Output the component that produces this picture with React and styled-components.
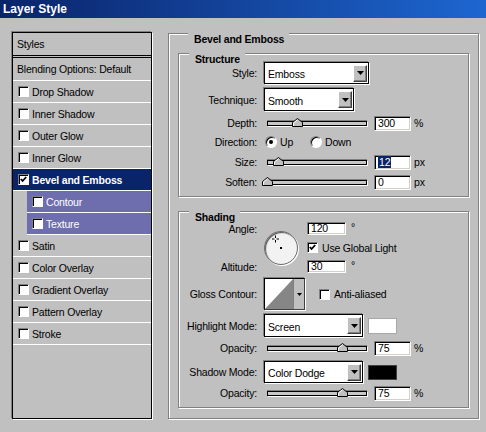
import React from 'react';
import styled, { createGlobalStyle } from 'styled-components';

const GlobalStyle = createGlobalStyle`
  html, body {
    margin: 0;
    padding: 0;
    background: #c0c0c0;
  }
`;

const layerStyles = [
  { label: 'Drop Shadow' },
  { label: 'Inner Shadow' },
  { label: 'Outer Glow' },
  { label: 'Inner Glow' },
  { label: 'Bevel and Emboss', checked: true, tone: 'active' },
  { label: 'Contour', tone: 'sub' },
  { label: 'Texture', tone: 'sub' },
  { label: 'Satin' },
  { label: 'Color Overlay' },
  { label: 'Gradient Overlay' },
  { label: 'Pattern Overlay' },
  { label: 'Stroke' },
];

const CheckBox = ({ checked }) => (
  <Check>
    {checked && (
      <svg width="7" height="7" viewBox="0 0 7 7">
        <polyline points="0.8,3 2.6,5 6.2,1" fill="none" stroke="#000" strokeWidth="1.8" />
      </svg>
    )}
  </Check>
);

const Select = ({ value, width, height }) => (
  <SelectBox $w={width} $h={height}>
    <SelectText>{value}</SelectText>
    <DropButton>
      <svg width="7" height="4" viewBox="0 0 7 4">
        <polygon points="0,0 7,0 3.5,4" fill="#000" />
      </svg>
    </DropButton>
  </SelectBox>
);

const SliderField = ({ value, text, unit, selected }) => (
  <>
    <Slider>
      <Track />
      <Thumb style={{ left: `calc(${value}% - 5px)` }}>
        <svg width="11" height="9" viewBox="0 0 11 9">
          <polygon points="0.5,8.5 0.5,4.5 5.5,0.5 10.5,4.5 10.5,8.5" fill="#c0c0c0" stroke="#000" />
          <polyline points="1.5,8 1.5,5 5.5,1.8" fill="none" stroke="#fff" />
        </svg>
      </Thumb>
    </Slider>
    <Value>
      <NumberField>{selected ? <Selected>{text}</Selected> : text}</NumberField>
      <Unit>{unit}</Unit>
    </Value>
  </>
);

const App = () => {
  return (
    <Window>
      <GlobalStyle />
      <TitleBar>Layer Style</TitleBar>
      <Main>
        <StyleList>
          <ListHeader $double>Styles</ListHeader>
          <ListHeader>Blending Options: Default</ListHeader>
          {layerStyles.map((s) => (
            <ListItem key={s.label} $sub={s.tone === 'sub'}>
              <ItemBody $tone={s.tone}>
                <CheckBox checked={s.checked} />
                {s.label}
              </ItemBody>
            </ListItem>
          ))}
        </StyleList>

        <GroupBox $px={9} $pb={10} $mt={1} $w={311}>
          <Caption>Bevel and Emboss</Caption>

          <GroupBox $pb={6} $mt={11}>
            <Caption>Structure</Caption>
            <FieldRow $h={22}>
              <Label>Style:</Label>
              <Controls>
                <Select value="Emboss" width={105} height={22} />
              </Controls>
            </FieldRow>
            <FieldRow $h={23} $mt={4}>
              <Label>Technique:</Label>
              <Controls>
                <Select value="Smooth" width={90} height={23} />
              </Controls>
            </FieldRow>
            <FieldRow $h={16} $mt={4}>
              <Label>Depth:</Label>
              <Controls>
                <SliderField value={30} text="300" unit="%" />
              </Controls>
            </FieldRow>
            <FieldRow $h={16} $mt={3}>
              <Label>Direction:</Label>
              <Controls $gap={0}>
                <RadioOption $w={44}>
                  <Radio $on />
                  Up
                </RadioOption>
                <RadioOption>
                  <Radio />
                  Down
                </RadioOption>
              </Controls>
            </FieldRow>
            <FieldRow $h={16} $mt={4}>
              <Label>Size:</Label>
              <Controls>
                <SliderField value={11} text="12" unit="px" selected />
              </Controls>
            </FieldRow>
            <FieldRow $h={16} $mt={4}>
              <Label>Soften:</Label>
              <Controls>
                <SliderField value={0} text="0" unit="px" />
              </Controls>
            </FieldRow>
          </GroupBox>

          <GroupBox $pb={6} $mt={14}>
            <Caption>Shading</Caption>
            <AngleGrid>
              <Label $row={1}>Angle:</Label>
              <Dial>
                <svg width="32" height="32" viewBox="0 0 32 32">
                  <g stroke="#000" strokeWidth="1">
                    <line x1="7" y1="7" x2="9.5" y2="7" />
                    <line x1="11.5" y1="7" x2="14" y2="7" />
                    <line x1="10.5" y1="3.5" x2="10.5" y2="6" />
                    <line x1="10.5" y1="8" x2="10.5" y2="10.5" />
                  </g>
                  <rect x="15" y="15" width="2" height="2" fill="#000" />
                </svg>
              </Dial>
              <Value $row={1}>
                <NumberField $w={39} $h={13}>120</NumberField>
                <Degree>°</Degree>
              </Value>
              <CheckLabel $row={2}>
                <CheckBox checked />
                Use Global Light
              </CheckLabel>
              <Label $row={3}>Altitude:</Label>
              <Value $row={3}>
                <NumberField $w={39} $h={13}>30</NumberField>
                <Degree>°</Degree>
              </Value>
            </AngleGrid>

            <FieldRow $h={32} $mt={5}>
              <Label>Gloss Contour:</Label>
              <Controls $gap={14}>
                <ContourPicker>
                  <svg width="28" height="30" viewBox="0 0 28 30">
                    <rect width="28" height="30" fill="#fff" />
                    <polygon points="0,30 28,0 28,30" fill="#868686" />
                  </svg>
                  <PickerArrow>
                    <svg width="5" height="3" viewBox="0 0 5 3">
                      <polygon points="0,0 5,0 2.5,3" fill="#000" />
                    </svg>
                  </PickerArrow>
                </ContourPicker>
                <CheckLabel>
                  <CheckBox />
                  Anti-aliased
                </CheckLabel>
              </Controls>
            </FieldRow>
            <FieldRow $h={23} $mt={4}>
              <Label>Highlight Mode:</Label>
              <Controls $gap={5}>
                <Select value="Screen" width={99} height={23} />
                <Swatch $color="#fff" $h={16} />
              </Controls>
            </FieldRow>
            <FieldRow $h={16} $mt={3}>
              <Label>Opacity:</Label>
              <Controls>
                <SliderField value={75} text="75" unit="%" />
              </Controls>
            </FieldRow>
            <FieldRow $h={22} $mt={5}>
              <Label>Shadow Mode:</Label>
              <Controls $gap={5}>
                <Select value="Color Dodge" width={99} height={22} />
                <Swatch $color="#000" $h={15} />
              </Controls>
            </FieldRow>
            <FieldRow $h={16} $mt={2}>
              <Label>Opacity:</Label>
              <Controls>
                <SliderField value={75} text="75" unit="%" />
              </Controls>
            </FieldRow>
          </GroupBox>
        </GroupBox>
      </Main>
    </Window>
  );
};

const Window = styled.div`
  width: 486px;
  height: 432px;
  overflow: hidden;
  background: #c0c0c0;
  color: #000;
  font-family: 'Liberation Sans', Arial, sans-serif;
  font-size: 10.5px;
  letter-spacing: -0.2px;
`;

const TitleBar = styled.div`
  height: 18px;
  line-height: 18px;
  padding-left: 3px;
  background: linear-gradient(to right, #0a246a, #1d66d0);
  color: #fff;
  font-size: 12px;
  font-weight: bold;
  letter-spacing: 0;
`;

const Main = styled.div`
  display: flex;
  align-items: flex-start;
  gap: 16px;
  padding: 14px 0 0 12px;
`;

const StyleList = styled.div`
  display: flex;
  flex-direction: column;
  width: 140px;
  height: 387px;
  box-sizing: border-box;
  border: 1px solid #000;
  box-shadow: -1px -1px 0 #808080, 1px 1px 0 #fff;
`;

const ListHeader = styled.div`
  display: flex;
  align-items: center;
  height: 22px;
  padding-left: 4px;
  border-bottom: ${(p) => (p.$double ? '3px double #000' : '1px solid #fff')};
`;

const ListItem = styled.div`
  display: flex;
  height: 22px;
  padding-left: ${(p) => (p.$sub ? 14 : 0)}px;
`;

const ItemBody = styled.div`
  flex: 1;
  display: flex;
  align-items: center;
  gap: 3px;
  padding-left: 5px;
  border-bottom: 1px solid #fff;
  background: ${(p) => (p.$tone === 'active' ? '#0a246a' : p.$tone === 'sub' ? '#6e6eae' : 'transparent')};
  color: ${(p) => (p.$tone ? '#fff' : '#000')};
  font-weight: ${(p) => (p.$tone === 'active' ? 'bold' : 'normal')};
`;

const Check = styled.span`
  display: flex;
  align-items: center;
  justify-content: center;
  flex: none;
  width: 11px;
  height: 11px;
  box-sizing: border-box;
  background: #fff;
  border: 1px solid;
  border-color: #808080 #fff #fff #808080;
  box-shadow: inset 1px 1px 0 #000;
`;

const GroupBox = styled.div`
  display: flex;
  flex-direction: column;
  box-sizing: border-box;
  width: ${(p) => (p.$w ? `${p.$w}px` : 'auto')};
  margin-top: ${(p) => p.$mt || 0}px;
  padding: 0 ${(p) => p.$px || 0}px ${(p) => p.$pb || 0}px;
  border: 1px solid #808080;
  box-shadow: inset 1px 1px 0 #fff, 1px 1px 0 #fff;
`;

const Caption = styled.div`
  align-self: flex-start;
  margin: -1px 0 -4px 10px;
  padding: 0 5px 0 6px;
  line-height: 13px;
  background: #c0c0c0;
  font-weight: bold;
`;

const FieldRow = styled.div`
  display: grid;
  grid-template-columns: 78px auto;
  column-gap: 7px;
  align-items: center;
  height: ${(p) => p.$h}px;
  margin-top: ${(p) => p.$mt || 0}px;
`;

const Label = styled.span`
  grid-column: 1;
  grid-row: ${(p) => p.$row || 'auto'};
  text-align: right;
  white-space: nowrap;
`;

const Controls = styled.div`
  display: flex;
  align-items: center;
  gap: ${(p) => (p.$gap ?? 7)}px;
`;

const SelectBox = styled.div`
  display: flex;
  align-items: center;
  justify-content: space-between;
  width: ${(p) => p.$w}px;
  height: ${(p) => p.$h}px;
  box-sizing: border-box;
  padding: 0 1px 0 3px;
  background: #fff;
  border: 1px solid #000;
  box-shadow: -1px -1px 0 #808080, 1px 1px 0 #fff;
`;

const SelectText = styled.span`
  padding-top: 2px;
  white-space: nowrap;
`;

const DropButton = styled.span`
  display: flex;
  align-items: center;
  justify-content: center;
  width: 14px;
  height: 17px;
  box-sizing: border-box;
  background: #c0c0c0;
  border: 1px solid;
  border-color: #fff #404040 #404040 #fff;
  box-shadow: inset -1px -1px 0 #808080;
`;

const Slider = styled.div`
  position: relative;
  display: flex;
  align-items: center;
  width: 100px;
  height: 16px;
  margin-left: 3px;
`;

const Track = styled.div`
  width: 100%;
  height: 5px;
  box-sizing: border-box;
  background: #c8c8c8;
  border: 1px solid #000;
  box-shadow: 0 -1px 0 #808080, 1px 1px 0 #fff;
`;

const Thumb = styled.div`
  position: absolute;
  top: 3px;
  width: 11px;
  height: 9px;
  line-height: 0;
`;

const Value = styled.div`
  display: flex;
  align-items: center;
  gap: 3px;
  grid-column: 3;
  grid-row: ${(p) => p.$row || 'auto'};
  margin-left: ${(p) => (p.$row ? 2 : 0)}px;
`;

const NumberField = styled.div`
  width: ${(p) => p.$w || 37}px;
  height: ${(p) => p.$h || 15}px;
  box-sizing: border-box;
  padding-left: 3px;
  line-height: ${(p) => (p.$h || 15) - 2}px;
  background: #fff;
  border: 1px solid;
  border-color: #808080 #fff #fff #808080;
  box-shadow: inset 1px 1px 0 #000, inset -1px -1px 0 #d4d0c8;
`;

const Selected = styled.span`
  background: #0a246a;
  color: #fff;
  padding: 0 1px;
`;

const Unit = styled.span`
  white-space: nowrap;
`;

const Degree = styled.span`
  margin-left: 2px;
  align-self: flex-start;
  line-height: 10px;
`;

const RadioOption = styled.label`
  display: flex;
  align-items: center;
  gap: 3px;
  width: ${(p) => (p.$w ? `${p.$w}px` : 'auto')};
  margin-left: 1px;
`;

const Radio = styled.span`
  display: flex;
  align-items: center;
  justify-content: center;
  width: 12px;
  height: 12px;
  box-sizing: border-box;
  border-radius: 50%;
  background: #fff;
  border: 1px solid;
  border-color: #808080 #fff #fff #808080;
  box-shadow: inset 1px 1px 0 #000;

  &::after {
    content: '';
    display: ${(p) => (p.$on ? 'block' : 'none')};
    width: 4px;
    height: 4px;
    border-radius: 50%;
    background: #000;
  }
`;

const AngleGrid = styled.div`
  display: grid;
  grid-template-columns: 78px 34px auto;
  grid-template-rows: 13px 25px 13px;
  column-gap: 7px;
  align-items: center;
  margin-top: 2px;
`;

const Dial = styled.div`
  grid-column: 2;
  grid-row: 1 / 4;
  width: 34px;
  height: 34px;
  box-sizing: border-box;
  border-radius: 50%;
  background: #f2f2f2;
  border: 1px solid #6a6a6a;
  box-shadow: inset 1px 1px 1px #505050, 1px 1px 0 #fff;
  line-height: 0;
`;

const CheckLabel = styled.label`
  display: flex;
  align-items: center;
  gap: 4px;
  grid-column: 3;
  grid-row: ${(p) => p.$row || 'auto'};
  margin-left: ${(p) => (p.$row ? 2 : 0)}px;
  white-space: nowrap;
`;

const ContourPicker = styled.div`
  display: flex;
  width: 41px;
  height: 32px;
  box-sizing: border-box;
  background: #fff;
  border: 1px solid;
  border-color: #000 #404040 #404040 #000;
  box-shadow: -1px -1px 0 #808080, 1px 1px 0 #fff;
  line-height: 0;
`;

const PickerArrow = styled.div`
  flex: 1;
  display: flex;
  align-items: center;
  justify-content: center;
  background: #c0c0c0;
  border-left: 1px solid #808080;
`;

const Swatch = styled.div`
  width: 29px;
  height: ${(p) => p.$h}px;
  box-sizing: border-box;
  background: ${(p) => p.$color};
  border: 1px solid ${(p) => (p.$color === '#000' ? '#404040' : '#a8a8a8')};
`;

export default App;
